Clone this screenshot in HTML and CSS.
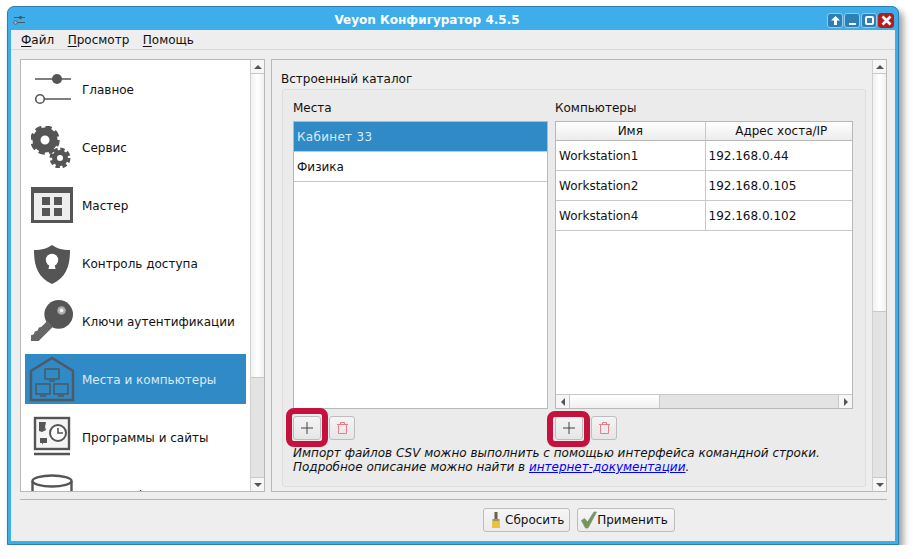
FILE: index.html
```html
<!DOCTYPE html>
<html lang="ru">
<head>
    <meta charset="UTF-8">
    <meta name="viewport" content="width=device-width, initial-scale=1.0">
    <title>Veyon Конфигуратор 4.5.5</title>
    <link rel="stylesheet" href="styles.css">
</head>
<body>
<div class="window">

    <!-- Заголовок окна -->
    <div class="titlebar">
        <svg class="title-icon" width="12" height="10" viewBox="0 0 12 10">
            <path d="M1 2.5h11M1 7.5h11" stroke="#4d5a66" stroke-width="1"/>
            <circle cx="7.5" cy="2.5" r="1.7" fill="#4d5a66"/>
            <circle cx="2.5" cy="7.5" r="1.8" fill="#9fb4c2" stroke="#4d5a66" stroke-width=".8"/>
        </svg>
        <div class="title-text">Veyon Конфигуратор 4.5.5</div>
        <div class="win-buttons">
            <div class="win-btn">
                <svg width="11" height="11" viewBox="0 0 11 11"><path d="M5.5 1 10 5.500H7V10H4V5.500H1z" fill="#fff"/></svg>
            </div>
            <div class="win-btn">
                <svg width="11" height="11" viewBox="0 0 11 11"><rect x="2" y="8" width="7" height="2" fill="#fff"/></svg>
            </div>
            <div class="win-btn">
                <svg width="11" height="11" viewBox="0 0 11 11"><rect x="2" y="2" width="7" height="7" rx="1" fill="none" stroke="#fff" stroke-width="2"/></svg>
            </div>
            <div class="win-btn win-close">
                <svg width="11" height="11" viewBox="0 0 11 11"><path d="M1.500 1.500l8 8M9.500 1.500l-8 8" stroke="#fff" stroke-width="2.600"/></svg>
            </div>
        </div>
    </div>

    <div class="content">

        <div class="menubar">
            <span class="menu-item"><u>Ф</u>айл</span>
            <span class="menu-item"><u>П</u>росмотр</span>
            <span class="menu-item"><u>П</u>омощь</span>
        </div>

        <div class="main">

            <!-- Список разделов -->
            <div class="sidebar">
                <div class="side-list">
                    <div class="side-item">
                        <svg class="side-icon" viewBox="0 0 42 42">
                            <path d="M4 11h36M12 31h28" stroke="#555" stroke-width="1.400"/>
                            <circle cx="26" cy="11" r="5" fill="#555"/>
                            <circle cx="9" cy="31" r="4.300" fill="#fff" stroke="#555" stroke-width="1.600"/>
                        </svg>
                        <span>Главное</span>
                    </div>
                    <div class="side-item">
                        <svg class="side-icon" viewBox="0 0 42 42">
                            <circle cx="14" cy="14" r="8.500" fill="none" stroke="#555" stroke-width="8"/>
                            <circle cx="14" cy="14" r="12.500" fill="none" stroke="#555" stroke-width="4.500" stroke-dasharray="6 3.820"/>
                            <circle cx="29" cy="32" r="5.500" fill="none" stroke="#555" stroke-width="5"/>
                            <circle cx="29" cy="32" r="9" fill="none" stroke="#555" stroke-width="3" stroke-dasharray="4.400 2.670"/>
                        </svg>
                        <span>Сервис</span>
                    </div>
                    <div class="side-item">
                        <svg class="side-icon" viewBox="0 0 42 36">
                            <rect width="42" height="36" fill="#555"/>
                            <rect x="3" y="6" width="36" height="27" fill="#eee"/>
                            <rect x="11" y="10" width="8" height="8" fill="#555"/>
                            <rect x="23" y="10" width="8" height="8" fill="#555"/>
                            <rect x="11" y="21" width="8" height="8" fill="#555"/>
                            <rect x="23" y="21" width="8" height="8" fill="#555"/>
                        </svg>
                        <span>Мастер</span>
                    </div>
                    <div class="side-item">
                        <svg class="side-icon" viewBox="0 0 42 42">
                            <path d="M21 3C17 6 11 8 3 8c0 15 3 27 18 34C36 35 39 23 39 8 31 8 25 6 21 3z" fill="#555"/>
                            <circle cx="21" cy="18" r="6.200" fill="#fff"/>
                            <path d="M19 20h4l1.500 7h-7z" fill="#fff"/>
                        </svg>
                        <span>Контроль доступа</span>
                    </div>
                    <div class="side-item">
                        <svg class="side-icon" viewBox="0 0 44 44">
                            <circle cx="29" cy="15" r="15" fill="#555"/>
                            <circle cx="32" cy="11" r="4.500" fill="#aaa"/>
                            <circle cx="32" cy="11" r="2" fill="#eee"/>
                            <path d="M17 22l6 6-15 15H0v-6l3-1 1-3 3-1 1-3 3-1z" fill="#666"/>
                        </svg>
                        <span>Ключи аутентификации</span>
                    </div>
                    <div class="side-item side-active">
                        <svg class="side-icon" viewBox="0 0 46 46">
                            <path d="M2 44V15L23 2l21 13v29z" fill="none" stroke="#4d5a66" stroke-width="2.400"/>
                            <g fill="none" stroke="#4d5a66" stroke-width="1.600">
                                <rect x="16" y="13" width="14" height="10"/>
                                <path d="M20 25h6"/>
                                <rect x="7" y="28" width="14" height="10"/>
                                <path d="M11 40h6"/>
                                <rect x="25" y="28" width="14" height="10"/>
                                <path d="M29 40h6"/>
                            </g>
                        </svg>
                        <span>Места и компьютеры</span>
                    </div>
                    <div class="side-item">
                        <svg class="side-icon" viewBox="0 0 42 42">
                            <rect x="4" y="2" width="34" height="31" fill="#f4f4f4" stroke="#555" stroke-width="2.400"/>
                            <path d="M3 38h36" stroke="#555" stroke-width="2.400"/>
                            <path d="M8 6h7l-1 5 1 3-4 2-3-1z" fill="#555"/>
                            <path d="M9 22h7v5h-4l-1 2v-2H9z" fill="#555"/>
                            <circle cx="27" cy="17" r="8" fill="#fff" stroke="#555" stroke-width="2"/>
                            <path d="M27 12v5h5" fill="none" stroke="#555" stroke-width="1.600"/>
                        </svg>
                        <span>Программы и сайты</span>
                    </div>
                    <div class="side-item">
                        <svg class="side-icon" viewBox="0 0 42 42">
                            <ellipse cx="21" cy="7" rx="19.500" ry="5.500" fill="#fff" stroke="#555" stroke-width="2.400"/>
                            <path d="M1.500 7v30M40.500 7v30" stroke="#555" stroke-width="2.400"/>
                        </svg>
                        <span>LDAP Basic</span>
                    </div>
                </div>
                <div class="scrollbar">
                    <div class="sb-btn"><i class="arrow-up"></i></div>
                    <div class="sb-thumb side-thumb"></div>
                    <div class="sb-track"></div>
                    <div class="sb-btn sb-btn-end"><i class="arrow-down"></i></div>
                </div>
            </div>

            <!-- Страница настроек -->
            <div class="page">
                <div class="page-body">
                    <div class="group-title">Встроенный каталог</div>
                    <div class="group">
                        <div class="col col-places">
                            <div class="col-title">Места</div>
                            <div class="places">
                                <div class="place place-active">Кабинет 33</div>
                                <div class="place">Физика</div>
                            </div>
                            <div class="tools">
                                <div class="tool-wrap">
                                    <button class="tool">
                                        <svg width="12" height="12" viewBox="0 0 12 12"><path d="M6 0v12M0 6h12" stroke="#444" stroke-width="1"/></svg>
                                    </button>
                                    <div class="mark"></div>
                                </div>
                                <button class="tool tool-remove">
                                    <svg width="11" height="12" viewBox="0 0 11 12"><path d="M0 2.500h11M3.500 2.500V.5h4v2M1.500 2.500v9h8v-9" fill="none" stroke="#e87c88" stroke-width="1"/></svg>
                                </button>
                            </div>
                        </div>
                        <div class="col col-hosts">
                            <div class="col-title">Компьютеры</div>
                            <div class="hosts">
                                <table class="hosts-table">
                                    <thead>
                                        <tr><th>Имя</th><th>Адрес хоста/IP</th></tr>
                                    </thead>
                                    <tbody>
                                        <tr><td>Workstation1</td><td>192.168.0.44</td></tr>
                                        <tr><td>Workstation2</td><td>192.168.0.105</td></tr>
                                        <tr><td>Workstation4</td><td>192.168.0.102</td></tr>
                                    </tbody>
                                </table>
                                <div class="hscroll">
                                    <div class="hs-btn"><i class="arrow-left"></i></div>
                                    <div class="hs-thumb"></div>
                                    <div class="hs-track"></div>
                                    <div class="hs-btn hs-btn-end"><i class="arrow-right"></i></div>
                                </div>
                            </div>
                            <div class="tools">
                                <div class="tool-wrap">
                                    <button class="tool">
                                        <svg width="12" height="12" viewBox="0 0 12 12"><path d="M6 0v12M0 6h12" stroke="#444" stroke-width="1"/></svg>
                                    </button>
                                    <div class="mark mark-hosts"></div>
                                </div>
                                <button class="tool tool-remove">
                                    <svg width="11" height="12" viewBox="0 0 11 12"><path d="M0 2.500h11M3.500 2.500V.5h4v2M1.500 2.500v9h8v-9" fill="none" stroke="#e87c88" stroke-width="1"/></svg>
                                </button>
                            </div>
                        </div>
                        <p class="note">Импорт файлов CSV можно выполнить с помощью интерфейса командной строки.<br>Подробное описание можно найти в <a href="#">интернет-документации</a>.</p>
                    </div>
                </div>
                <div class="scrollbar">
                    <div class="sb-btn"><i class="arrow-up"></i></div>
                    <div class="sb-thumb page-thumb"></div>
                    <div class="sb-track"></div>
                    <div class="sb-btn sb-btn-end"><i class="arrow-down"></i></div>
                </div>
            </div>
        </div>

        <div class="separator"></div>

        <div class="footer">
            <button class="btn">
                <svg width="14" height="16" viewBox="0 0 14 16">
                    <rect x="5.500" y="0" width="3" height="8" fill="#6b6048"/>
                    <rect x="3.500" y="7" width="7" height="2" fill="#a8925a"/>
                    <rect x="3" y="9" width="8" height="7" fill="#e6c53a"/>
                </svg>
                Сбросить
            </button>
            <button class="btn btn-apply">
                <svg width="17" height="18" viewBox="0 0 17 18">
                    <path d="M1.500 9.500l3-2 3 3.500L14 1h2.500L8 17H5.500z" fill="#6f9a52" stroke="#8a8a8a" stroke-width=".8"/>
                </svg>
                Применить
            </button>
        </div>
    </div>
</div>
</body>
</html>
```

FILE: styles.css
```css
* {
    box-sizing: border-box;
}
body {
    margin: 0;
    padding: 6px 0 0 7px;
    background-color: #fff;
    font-family: "DejaVu Sans", sans-serif;
    font-size: 12px;
    color: #111;
}
.window {
    width: 892px;
    height: 539px;
    padding: 3px;
    background-color: #3daee9;
    border: 1px solid #2c7fb0;
    border-radius: 7px 7px 0 0;
    box-shadow: 4px 5px 7px rgba(0, 0, 0, 0.4);
    display: flex;
    flex-direction: column;
}

/* заголовок */
.titlebar {
    height: 20px;
    display: flex;
    align-items: center;
    flex: none;
}
.title-icon {
    margin-left: 2px;
}
.title-text {
    flex: 1;
    padding-left: 2px;
    text-align: center;
    font-weight: bold;
    color: #fff;
}
.win-buttons {
    display: flex;
    gap: 1px;
    margin-right: 1px;
}
.win-btn {
    width: 16px;
    height: 15px;
    background-color: #2d7fb4;
    border: 1px solid #8fcdf0;
    border-radius: 3px;
    display: flex;
    align-items: center;
    justify-content: center;
}
.win-close {
    background-color: #b71c1c;
    border-color: #b71c1c;
}

.content {
    flex: 1;
    min-height: 0;
    background-color: #eee;
    display: flex;
    flex-direction: column;
}
.menubar {
    height: 20px;
    flex: none;
    padding-left: 10px;
    display: flex;
    gap: 13.5px;
    align-items: center;
    border-bottom: 1px solid #d8d8d8;
}
.menu-item u {
    text-underline-offset: 2px;
}
.main {
    height: 433px;
    margin: 9px 8px 0 9px;
    flex: none;
    display: flex;
    gap: 6px;
}

/* левый список */
.sidebar {
    width: 245px;
    flex: none;
    border: 1px solid #b8b8b8;
    background-color: #fff;
    display: flex;
}
.side-list {
    flex: 1;
    min-width: 0;
    overflow: hidden;
    padding: 4px;
    display: flex;
    flex-direction: column;
    gap: 8px;
}
.side-item {
    height: 50px;
    flex: none;
    display: flex;
    align-items: center;
    gap: 9px;
    padding-left: 6px;
}
.side-item span {
    padding-top: 2px;
}
.side-icon {
    width: 42px;
    height: 42px;
    flex: none;
}
.side-active {
    background-color: #2f8ac6;
    color: #dcebf6;
}
.side-active .side-icon {
    width: 46px;
    height: 46px;
    margin: 0 -2px;
}

/* полоса прокрутки */
.scrollbar {
    width: 14px;
    flex: none;
    border-left: 1px solid #d0d0d0;
    display: flex;
    flex-direction: column;
    background-color: #e3e3e3;
}
.sb-btn {
    height: 14px;
    flex: none;
    background-color: #f6f6f6;
    border-bottom: 1px solid #c8c8c8;
    display: flex;
    align-items: center;
    justify-content: center;
}
.sb-btn-end {
    border-bottom: 0;
    border-top: 1px solid #c8c8c8;
}
.sb-thumb {
    flex: none;
    background: linear-gradient(to right, #f0f0f0, #fff 50%, #f0f0f0);
    border-bottom: 1px solid #c8c8c8;
}
.side-thumb {
    height: 304px;
}
.page-thumb {
    height: 238px;
}
.sb-track {
    flex: 1;
}
.arrow-up,
.arrow-down,
.arrow-left,
.arrow-right {
    width: 0;
    height: 0;
    border-style: solid;
    border-color: transparent;
}
.arrow-up {
    border-width: 0 4px 4px;
    border-bottom-color: #555;
}
.arrow-down {
    border-width: 4px 4px 0;
    border-top-color: #555;
}
.arrow-left {
    border-width: 4px 4px 4px 0;
    border-right-color: #555;
}
.arrow-right {
    border-width: 4px 0 4px 4px;
    border-left-color: #555;
}

/* правая страница */
.page {
    width: 616px;
    flex: none;
    border: 1px solid #b8b8b8;
    display: flex;
}
.page-body {
    flex: 1;
    min-width: 0;
    padding: 0 6px 4px 10px;
    display: flex;
    flex-direction: column;
}
.group-title {
    height: 29px;
    flex: none;
    display: flex;
    align-items: flex-end;
    padding: 0 0 3px 0;
    margin-left: -1px;
}
.group {
    flex: 1;
    background-color: #ebebeb;
    border: 1px solid #ddd;
    border-radius: 3px;
    padding: 0 10px;
    display: grid;
    grid-template-columns: 255px 298px;
    grid-template-rows: auto auto;
    column-gap: 7px;
    align-content: start;
}
.col {
    display: flex;
    flex-direction: column;
}
.col-title {
    height: 31px;
    display: flex;
    align-items: center;
    padding-top: 4px;
}
.places {
    height: 288px;
    background-color: #fff;
    border: 1px solid #b8b8b8;
}
.place {
    height: 30px;
    padding-left: 3px;
    display: flex;
    align-items: center;
    border-bottom: 1px solid #c8c8c8;
}
.place-active {
    background-color: #2f8ac6;
    color: #dcebf6;
    letter-spacing: 0.3px;
}
.hosts {
    height: 288px;
    background-color: #fff;
    border: 1px solid #b8b8b8;
    display: flex;
    flex-direction: column;
    justify-content: space-between;
}
.hosts-table {
    width: 100%;
    table-layout: fixed;
    border-collapse: collapse;
}
.hosts-table th {
    height: 18px;
    padding: 1px 0 0 5px;
    font-weight: normal;
    background: linear-gradient(#fff, #ececec);
    border-bottom: 1px solid #b8b8b8;
}
.hosts-table td {
    height: 30px;
    padding: 1px 0 0 3px;
    border-bottom: 1px solid #c8c8c8;
}
.hosts-table th:first-child,
.hosts-table td:first-child {
    width: 149px;
    border-right: 1px solid #c8c8c8;
}
.hosts-table th:first-child {
    padding-left: 0;
}
.hscroll {
    height: 14px;
    flex: none;
    display: flex;
    border-top: 1px solid #c8c8c8;
    background-color: #e3e3e3;
}
.hs-btn {
    width: 14px;
    flex: none;
    background-color: #f6f6f6;
    border-right: 1px solid #c8c8c8;
    display: flex;
    align-items: center;
    justify-content: center;
}
.hs-btn-end {
    border-right: 0;
    border-left: 1px solid #c8c8c8;
}
.hs-thumb {
    width: 90px;
    flex: none;
    background: linear-gradient(#fff, #f0f0f0);
    border-right: 1px solid #c8c8c8;
}
.hs-track {
    flex: 1;
}

/* кнопки добавления и удаления */
.tools {
    margin-top: 7px;
    display: flex;
    gap: 8px;
}
.tool-wrap {
    position: relative;
}
.tool {
    width: 28px;
    height: 24px;
    padding: 0;
    display: flex;
    align-items: center;
    justify-content: center;
    background: linear-gradient(#f4f4f4, #e6e6e6);
    border: 1px solid #bdbdbd;
    border-radius: 3px;
}
.tool-remove {
    width: 26px;
}
/* красная рамка вокруг кнопки */
.mark {
    position: absolute;
    left: -7px;
    top: -8px;
    width: 42px;
    height: 39px;
    border: 6px solid #c4113e;
    border-radius: 8px;
}
.mark-hosts {
    left: -8px;
    top: -5px;
    width: 43px;
    height: 36px;
}
.note {
    grid-column: 1 / 3;
    margin: 6px 0 0;
    font-style: italic;
    line-height: 14px;
}
.note a {
    color: #0000ff;
}

.separator {
    height: 1px;
    flex: none;
    margin: 7px 8px 0 9px;
    background-color: #b4b4b4;
}
.footer {
    flex: none;
    padding: 8px 0 0 472px;
    display: flex;
    gap: 7px;
}
.btn {
    height: 24px;
    padding: 0 5px;
    display: flex;
    align-items: center;
    gap: 2px;
    font-family: inherit;
    font-size: 12px;
    color: #111;
    background: linear-gradient(#f6f6f6, #ebebeb);
    border: 1px solid #bdbdbd;
    border-radius: 3px;
}
.btn-apply {
    padding: 0 6px 0 2px;
    gap: 0;
}
```
